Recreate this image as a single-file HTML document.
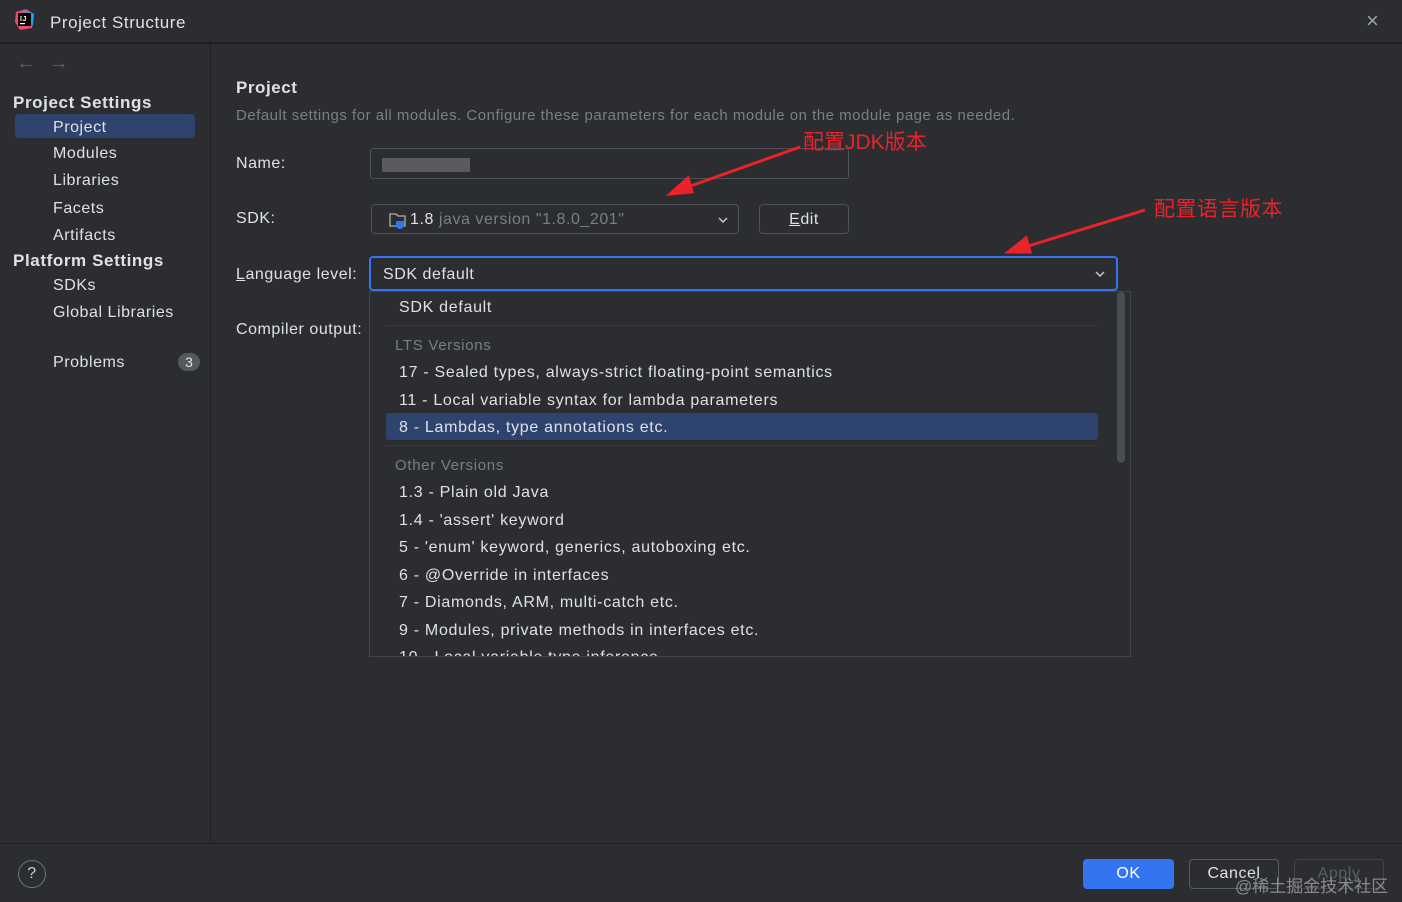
<!DOCTYPE html>
<html><head><meta charset="utf-8"><style>
*{margin:0;padding:0;box-sizing:border-box}
body{width:1402px;height:902px;background:#2b2d30;font-family:"Liberation Sans","Noto Sans CJK SC",sans-serif;color:#dfe1e5;position:relative;overflow:hidden;font-size:16px;letter-spacing:.55px}
.a{position:absolute;white-space:nowrap}
.g{color:#7a7e85}
.p div.a{letter-spacing:.7px}
</style></head><body>
<div class="a" style="left:0;top:42px;width:1402px;height:2px;background:#1e1f22"></div>
<div class="a" style="left:210px;top:44px;width:1px;height:800px;background:#1e1f22"></div>
<div class="a" style="left:0;top:843px;width:1402px;height:1px;background:#1e1f22"></div>
<svg class="a" style="left:14px;top:8px" width="22" height="24" viewBox="0 0 22 24"><path d="M2 4 L12 1 L20 6 L18 20 L6 22 L1 14Z" fill="#f0476e"/><path d="M10 2 L20 6 L19 18 L12 10Z" fill="#1fa0f0"/><rect x="4" y="5" width="13" height="13" fill="#000"/><text x="6" y="13" font-size="7" fill="#fff" font-family="Liberation Sans" font-weight="bold">IJ</text><rect x="6" y="15" width="5" height="1.2" fill="#fff"/></svg>
<div class="a" style="left:50px;top:13px;font-size:17px">Project Structure</div>
<div class="a" style="left:1366px;top:8px;font-size:22px;color:#9da0a8">×</div>
<div class="a g" style="left:16px;top:52px;font-size:20px;color:#5a5d63">← &nbsp;→</div>
<div class="a" style="left:13px;top:93px;font-size:17px;font-weight:bold;letter-spacing:.6px">Project Settings</div>
<div class="a" style="left:15px;top:114px;width:180px;height:24px;background:#2e436e;border-radius:4px"></div>
<div class="a" style="left:53px;top:119px">Project</div>
<div class="a" style="left:53px;top:145px">Modules</div>
<div class="a" style="left:53px;top:172px">Libraries</div>
<div class="a" style="left:53px;top:200px">Facets</div>
<div class="a" style="left:53px;top:227px">Artifacts</div>
<div class="a" style="left:13px;top:251px;font-size:17px;font-weight:bold;letter-spacing:.6px">Platform Settings</div>
<div class="a" style="left:53px;top:277px">SDKs</div>
<div class="a" style="left:53px;top:304px">Global Libraries</div>
<div class="a" style="left:53px;top:354px">Problems</div>
<div class="a" style="left:178px;top:353px;width:22px;height:18px;border-radius:9px;background:#55585e;font-size:14px;text-align:center;line-height:18px;letter-spacing:0">3</div>
<div class="a" style="left:18px;top:860px;width:28px;height:28px;border:1px solid #6f737a;border-radius:50%;text-align:center;line-height:26px;color:#ced0d6">?</div>

<div class="a" style="left:236px;top:78px;font-size:17px;font-weight:bold">Project</div>
<div class="a g" style="left:236px;top:107px;font-size:15px;letter-spacing:.5px">Default settings for all modules. Configure these parameters for each module on the module page as needed.</div>
<div class="a" style="left:236px;top:155px">Name:</div>
<div class="a" style="left:370px;top:148px;width:479px;height:31px;border:1px solid #4e5157;border-radius:3px"></div>
<div class="a" style="left:382px;top:158px;width:88px;height:14px;background:#6d6f74;opacity:.7"></div>
<div class="a" style="left:236px;top:210px">SDK:</div>
<div class="a" style="left:371px;top:204px;width:368px;height:30px;border:1px solid #4e5157;border-radius:4px;background:#2b2d30"></div>
<svg class="a" style="left:388px;top:210px" width="20" height="20" viewBox="0 0 20 20"><path d="M2 4h6l2 2h7v10H2Z" fill="none" stroke="#aeb1b6" stroke-width="1.3"/><path d="M8 11h8v4a4 4 0 0 1-8 0Z" fill="#3574f0"/></svg>
<div class="a" style="left:410px;top:211px">1.8 <span class="g">java version "1.8.0_201"</span></div>
<svg class="a" style="left:717px;top:214px" width="12" height="12"><path d="M2 4l4 4 4-4" fill="none" stroke="#ccc" stroke-width="1.4"/></svg>
<div class="a" style="left:759px;top:204px;width:90px;height:30px;border:1px solid #4e5157;border-radius:4px;text-align:center;line-height:29px"><u>E</u>dit</div>
<div class="a" style="left:236px;top:266px"><u>L</u>anguage level:</div>
<div class="a" style="left:369px;top:256px;width:749px;height:35px;border:2px solid #3574f0;border-radius:4px;background:#2b2d30"></div>
<div class="a" style="left:383px;top:266px">SDK default</div>
<svg class="a" style="left:1094px;top:268px" width="12" height="12"><path d="M2 4l4 4 4-4" fill="none" stroke="#ccc" stroke-width="1.4"/></svg>
<div class="a" style="left:236px;top:321px">Compiler output:</div>

<div class="a p" style="left:369px;top:291px;width:762px;height:366px;border:1px solid #43454a;background:#2b2d30;overflow:hidden">
<div class="a" style="left:747px;top:0;width:8px;height:171px;background:#4a4d52;border-radius:4px"></div>
<div class="a" style="left:29px;top:7px">SDK default</div>
<div class="a" style="left:16px;top:33px;width:712px;height:1px;background:#393b40"></div>
<div class="a g" style="left:25px;top:45px;font-size:15px">LTS Versions</div>
<div class="a" style="left:29px;top:72px">17 - Sealed types, always-strict floating-point semantics</div>
<div class="a" style="left:29px;top:100px">11 - Local variable syntax for lambda parameters</div>
<div class="a" style="left:16px;top:121px;width:712px;height:27px;background:#2e436e;border-radius:3px"></div>
<div class="a" style="left:29px;top:127px">8 - Lambdas, type annotations etc.</div>
<div class="a" style="left:16px;top:153px;width:712px;height:1px;background:#393b40"></div>
<div class="a g" style="left:25px;top:165px;font-size:15px">Other Versions</div>
<div class="a" style="left:29px;top:192px">1.3 - Plain old Java</div>
<div class="a" style="left:29px;top:220px">1.4 - 'assert' keyword</div>
<div class="a" style="left:29px;top:247px">5 - 'enum' keyword, generics, autoboxing etc.</div>
<div class="a" style="left:29px;top:275px">6 - @Override in interfaces</div>
<div class="a" style="left:29px;top:302px">7 - Diamonds, ARM, multi-catch etc.</div>
<div class="a" style="left:29px;top:330px">9 - Modules, private methods in interfaces etc.</div>
<div class="a" style="left:29px;top:357px">10 - Local variable type inference</div>
</div>

<svg class="a" style="left:660px;top:120px" width="650" height="140"><g stroke="#e8232a" stroke-width="3" fill="#e8232a"><line x1="140" y1="27" x2="25" y2="68"/><path d="M10 74 L28 58 L32 72Z"/><line x1="485" y1="90" x2="365" y2="127"/><path d="M348 132 L366 118 L370 132Z"/></g></svg>
<div class="a" style="left:803px;top:126px;color:#e8232a;font-size:21px;letter-spacing:0">配置JDK版本</div>
<div class="a" style="left:1154px;top:193px;color:#e8232a;font-size:21px;letter-spacing:.5px">配置语言版本</div>

<div class="a" style="left:1083px;top:859px;width:91px;height:30px;background:#3574f0;border-radius:4px;text-align:center;line-height:30px;color:#fff">OK</div>
<div class="a" style="left:1189px;top:859px;width:90px;height:30px;border:1px solid #5a5d63;border-radius:4px;text-align:center;line-height:28px">Cancel</div>
<div class="a" style="left:1294px;top:859px;width:90px;height:30px;border:1px solid #43454a;border-radius:4px;text-align:center;line-height:28px;color:#5a5d63">Apply</div>
<div class="a" style="left:1235px;top:872px;font-size:17px;color:#9a9ca0;opacity:.85;letter-spacing:0">@稀土掘金技术社区</div>
</body></html>
